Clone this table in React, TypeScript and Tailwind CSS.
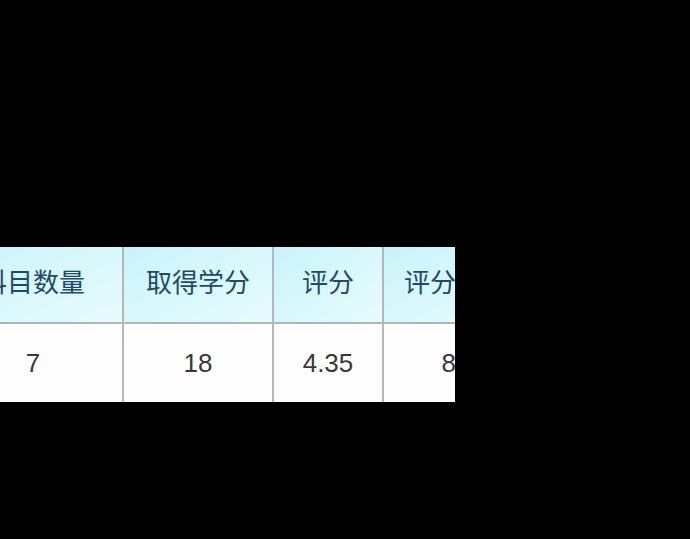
const columns = [
  { title: "科目数量", value: "7", width: "w-[180px]" },
  { title: "取得学分", value: "18", width: "w-[150px]" },
  { title: "评分", value: "4.35", width: "w-[110px]" },
  { title: "评分等级", value: "85", width: "w-[144px]" },
];

const FONT = "font-['Liberation_Sans','Noto_Sans_CJK_SC',sans-serif]";

export default function App() {
  return (
    <div className={`h-[539px] w-[690px] bg-black pt-[247px] ${FONT}`}>
      <div className="w-[455px] overflow-hidden">
        <div className="-ml-[56px] flex w-max">
          {columns.map((col, i) => (
            <div
              key={col.title}
              className={`flex shrink-0 flex-col ${col.width} ${
                i < columns.length - 1 ? "border-r-2 border-[#b4b8ba]" : ""
              }`}
            >
              <div className="flex h-[77px] items-center justify-center border-b-2 border-[#aeb6b9] bg-linear-to-br from-[#c8f4fa] to-[#e8fbfd] pb-[2px] text-[26px] text-[#1f4a68]">
                {col.title}
              </div>
              <div className="flex h-[78px] items-center justify-center bg-[#fdfdfd] text-[26px] text-[#383838]">
                {col.value}
              </div>
            </div>
          ))}
        </div>
      </div>
    </div>
  );
}
